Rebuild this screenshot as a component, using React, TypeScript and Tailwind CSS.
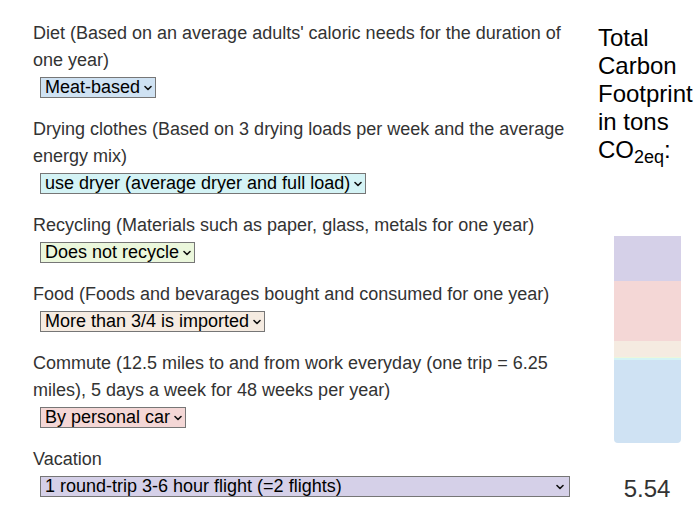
import React from "react";

const Chevron = () => (
  <svg width="8" height="6" viewBox="0 0 8 6" className="shrink-0">
    <path d="M1 1.5 L4 4.5 L7 1.5" fill="none" stroke="#111" strokeWidth="1.6" strokeLinecap="round" strokeLinejoin="round" />
  </svg>
);

function FakeSelect({ text, bg, wide }: { text: string; bg: string; wide?: boolean }) {
  return (
    <div
      className={`flex h-[21px] items-center border border-[#767676] pl-[4px] pr-[3px] text-[18px] leading-[19px] text-black ${bg} ${
        wide ? "w-[530px] justify-between" : "w-fit gap-[4px]"
      }`}
      role="combobox"
    >
      <span className="whitespace-nowrap">{text}</span>
      <span className={wide ? "pr-[2px]" : ""}>
        <Chevron />
      </span>
    </div>
  );
}

function Section({ label, value, bg, wide }: { label: string; value: string; bg: string; wide?: boolean }) {
  return (
    <div className="mb-[15px]">
      <p className="text-[18px] leading-[27px] text-[#333]">{label}</p>
      <div className="flex h-[27px] items-center pl-[7px]">
        <FakeSelect text={value} bg={bg} wide={wide} />
      </div>
    </div>
  );
}

export default function App() {
  return (
    <div className="flex h-[517px] w-[696px] overflow-hidden bg-white" style={{ fontFamily: '"Liberation Sans", Arial, sans-serif' }}>
      <div className="w-[570px] shrink-0 pl-[33px] pt-[20px]">
        <Section
          label="Diet (Based on an average adults' caloric needs for the duration of one year)"
          value="Meat-based"
          bg="bg-[#cfe2f3]"
        />
        <Section
          label="Drying clothes (Based on 3 drying loads per week and the average energy mix)"
          value="use dryer (average dryer and full load)"
          bg="bg-[#d4f3f5]"
        />
        <Section
          label="Recycling (Materials such as paper, glass, metals for one year)"
          value="Does not recycle"
          bg="bg-[#ebf7dc]"
        />
        <Section
          label="Food (Foods and bevarages bought and consumed for one year)"
          value="More than 3/4 is imported"
          bg="bg-[#f5ebe1]"
        />
        <Section
          label="Commute (12.5 miles to and from work everyday (one trip = 6.25 miles), 5 days a week for 48 weeks per year)"
          value="By personal car"
          bg="bg-[#f4d7d6]"
        />
        <Section label="Vacation" value="1 round-trip 3-6 hour flight (=2 flights)" bg="bg-[#d5d0e8]" wide />
      </div>
      <div className="ml-[28px] flex w-[98px] shrink-0 flex-col pt-[24px]">
        <h2 className="text-[24px] leading-[28px] text-black">
          Total Carbon Footprint in tons CO<sub>2eq</sub>:
        </h2>
        <div className="mx-auto mt-[72px] flex h-[207px] w-[67px] flex-col overflow-hidden rounded-b-[4px]">
          <div className="h-[45px] bg-[#d5d0e8]" />
          <div className="h-[60px] bg-[#f4d7d6]" />
          <div className="h-[16px] bg-[#f5ebe1]" />
          <div className="h-[1px] bg-[#ebf7dc]" />
          <div className="h-[2px] bg-[#d4f3f5]" />
          <div className="flex-1 bg-[#cfe2f3]" />
        </div>
        <p className="mt-[32px] text-center text-[24px] leading-[28px] text-[#333]">5.54</p>
      </div>
    </div>
  );
}
